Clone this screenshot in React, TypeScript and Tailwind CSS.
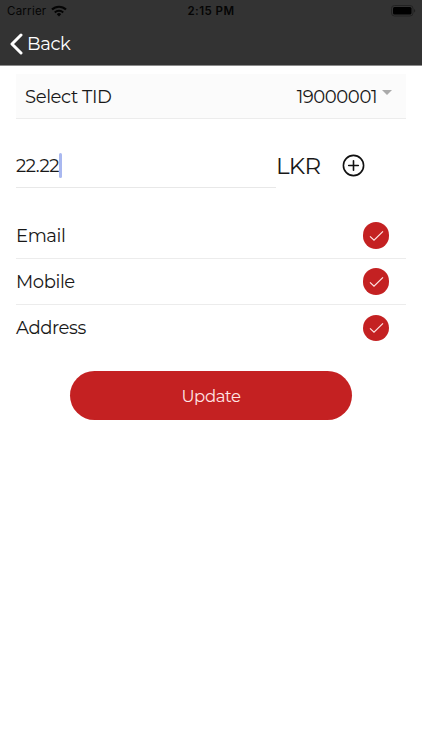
import { useState } from "react";

const FIELDS = ["Email", "Mobile", "Address"];

function StatusBar() {
  return (
    <div className="flex h-[22px] items-center pl-[7px] pr-[6px] font-[Inter,sans-serif] text-[11.5px] text-[#050505]">
      <div className="flex flex-1 items-center gap-[4px]">
        <span className="w-[40px] tracking-[0.25px]">Carrier</span>
        <svg width="16" height="12" viewBox="0 0 16 12" fill="none" stroke="currentColor" strokeWidth="2.1">
          <path d="M1 4.6a10 10 0 0 1 14 0" />
          <path d="M3.8 7.4a6 6 0 0 1 8.4 0" />
          <path d="M8 11.4 5.8 9.2a3.1 3.1 0 0 1 4.4 0z" fill="currentColor" stroke="none" />
        </svg>
      </div>
      <span className="mr-px text-[11.5px] font-semibold tracking-[0.45px]">2:15 PM</span>
      <div className="flex flex-1 justify-end">
        <svg width="25" height="12" viewBox="0 0 25 12">
          <rect x="0.5" y="0.5" width="21.5" height="10.5" rx="3" fill="none" stroke="#222222" />
          <rect x="2" y="2" width="18.5" height="7.5" rx="1.5" fill="#000000" />
          <path d="M23.2 4v3.6c1.3-.6 1.3-3 0-3.6z" fill="#1c1c1c" />
        </svg>
      </div>
    </div>
  );
}

export default function App() {
  const [selected, setSelected] = useState<string[]>(FIELDS);

  const toggle = (name: string) =>
    setSelected((s) => (s.includes(name) ? s.filter((n) => n !== name) : [...s, name]));

  return (
    <div className="min-h-[750px] w-full bg-white font-['Montserrat',Inter,sans-serif] text-[18px] leading-6 tracking-[-0.4px] text-[#181818]">
      {/* Header */}
      <header className="h-[66px] border-b border-[#8b8b8b] bg-[#333333]">
        <StatusBar />
        <button className="flex h-[43px] items-center pl-[10px] text-white">
          <svg width="13" height="22" viewBox="0 0 13 22" fill="none" stroke="currentColor" strokeWidth="3" strokeLinecap="round" strokeLinejoin="round">
            <path d="M11 2 2 11l9 9" />
          </svg>
          <span className="ml-[4px]">Back</span>
        </button>
      </header>

      <main className="px-[16px]">
        {/* Terminal picker */}
        <button className="mt-[8px] flex h-[45px] w-full items-center border-b border-[#ececec] bg-[#fbfbfb] pl-[9px] pr-[14px]">
          <span className="flex-1 pt-[2px] text-left">Select TID</span>
          <span className="pt-[2px]">19000001</span>
          <svg className="mb-[7px] ml-[5px]" width="10" height="5" viewBox="0 0 10 5" fill="#aaaaaa">
            <path d="M0 0h10L5 5z" />
          </svg>
        </button>

        {/* Amount */}
        <div className="mt-[25px] flex h-[44px]">
          <div className="flex w-[260px] items-center border-b border-[#e8e8e8]">
            <span className="tracking-[-0.4px]">22.22</span>
            <span className="h-[25px] w-[3px] rounded-full bg-[#a9b8f0]" />
          </div>
          <span className="flex w-[66px] items-center text-[23px] tracking-[-0.7px]">LKR</span>
          <button className="pb-[2px]" aria-label="Add amount">
            <svg width="23" height="23" viewBox="0 0 23 23" fill="none" stroke="#111111" strokeWidth="1.6" strokeLinecap="round">
              <circle cx="11.5" cy="11.5" r="10.1" />
              <path d="M11.5 6.7v9.6M6.7 11.5h9.6" />
            </svg>
          </button>
        </div>

        {/* Required fields */}
        <div className="mt-[25px] divide-y divide-[#ececec]">
          {FIELDS.map((name) => (
            <button key={name} onClick={() => toggle(name)} className="flex h-[46px] w-full items-center justify-between pr-[16.7px]">
              <span>{name}</span>
              <span className="flex size-[26.6px] items-center justify-center rounded-full bg-[#c42122]">
                {selected.includes(name) && (
                  <svg width="15" height="12" viewBox="0 0 15 12" fill="none" stroke="#ffe5e5" strokeWidth="1.2">
                    <path d="M1 6.4 5 10.2 14 1.4" />
                  </svg>
                )}
              </span>
            </button>
          ))}
        </div>

        <button className="mx-auto mt-[20.4px] flex h-[49px] w-[282px] items-center justify-center rounded-full bg-[#c42122] text-[16.5px] tracking-[-0.4px] text-[#ffe5e5]">
          Update
        </button>
      </main>
    </div>
  );
}
